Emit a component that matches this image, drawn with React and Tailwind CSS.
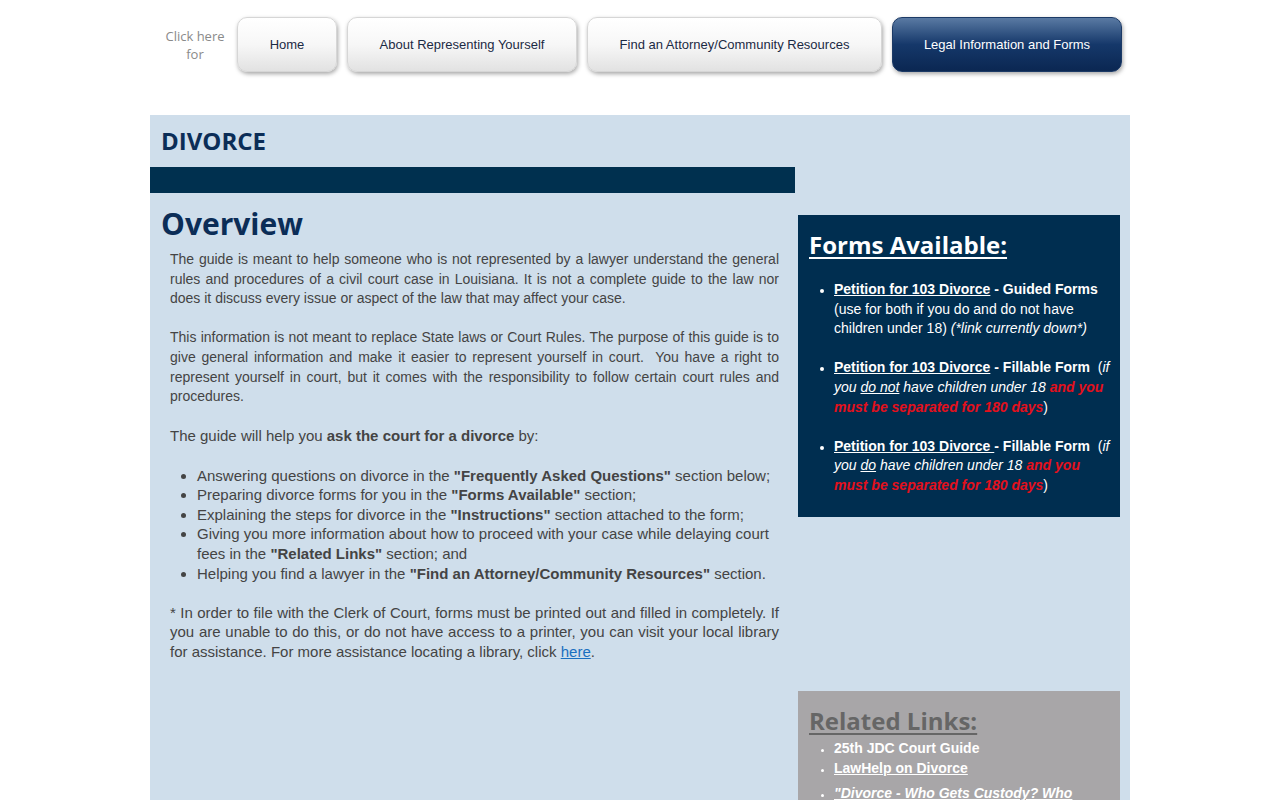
const open = { fontFamily: '"Open Sans", "Noto Sans", sans-serif' }
const arial = { fontFamily: '"Liberation Sans", Arial, sans-serif' }

export default function App() {
  return (
    <div className="min-h-screen bg-white" style={arial}>
      {/* NAV */}
      <div className="w-[980px] mx-auto flex items-start pt-[17px] h-[115px]">
        <div className="w-[86px] pl-[4px] pt-[10px] text-center text-[13px] leading-[18px] text-[#8a8a8a]" style={open}>
          Click here<br />for
        </div>
        <div className="flex gap-[10px] ml-[1px]">
          <NavButton w="w-[100px]">Home</NavButton>
          <NavButton w="w-[230px]">About Representing Yourself</NavButton>
          <NavButton w="w-[295px]">Find an Attorney/Community Resources</NavButton>
          <NavButton w="w-[230px]" active>Legal Information and Forms</NavButton>
        </div>
      </div>

      {/* MAIN */}
      <div className="w-[980px] mx-auto bg-[#cfdeeb] flex min-h-[685px]">
        <div className="w-[645px]">
          <div className="h-[52px] pl-[11px] flex items-center">
            <h1 className="text-[24px] font-bold text-[#0b2d57]" style={open}>DIVORCE</h1>
          </div>
          <div className="h-[26px] bg-[#00304f]" />
          <h2 className="pl-[11px] pt-[12px] text-[30px] leading-[38px] font-bold text-[#0b2d57]" style={open}>Overview</h2>
          <div className="pl-[20px] pr-[16px] pt-[7px] text-[14px] leading-[19.6px] text-[#444] text-justify space-y-[19.6px] pb-10">
            <p>
              The guide is meant to help someone who is not represented by a lawyer understand the general rules and procedures of a civil court case in Louisiana. It is not a complete guide to the law nor does it discuss every issue or aspect of the law that may affect your case.
            </p>
            <p>
              This information is not meant to replace State laws or Court Rules. The purpose of this guide is to give general information and make it easier to represent yourself in court.&nbsp; You have a right to represent yourself in court, but it comes with the responsibility to follow certain court rules and procedures.
            </p>
            <p className="text-[15px]">
              The guide will help you <strong>ask the court for a divorce</strong> by:
            </p>
            <ul className="list-disc pl-[27px] text-[15px] text-left">
              <li>Answering questions on divorce in the <strong>"Frequently Asked Questions"</strong> section below;</li>
              <li>Preparing divorce forms for you in the <strong>"Forms Available"</strong> section;</li>
              <li>Explaining the steps for divorce in the <strong>"Instructions"</strong> section attached to the form;</li>
              <li>Giving you more information about how to proceed with your case while delaying court fees in the <strong>"Related Links"</strong> section; and</li>
              <li>Helping you find a lawyer in the <strong>"Find an Attorney/Community Resources"</strong> section.</li>
            </ul>
            <p className="text-[15px]">
              * In order to file with the Clerk of Court, forms must be printed out and filled in completely. If you are unable to do this, or do not have access to a printer, you can visit your local library for assistance. For more assistance locating a library, click <a className="text-[#1a6fc0] underline">here</a>.
            </p>
          </div>
        </div>

        <div className="w-[322px] ml-[3px] pt-[100px]">
          <div className="bg-[#002e50] h-[302px] pl-[11px] pr-[6px] pt-[15px]">
            <h3 className="text-[24px] leading-[30px] font-bold text-white underline underline-offset-[3px] decoration-2" style={open}>Forms Available:</h3>
            <ul className="list-disc pl-[25px] mt-[20px] text-[14px] leading-[19.6px] text-white space-y-[19.6px] marker:text-[12px]">
              <li>
                <span className="font-bold underline">Petition for 103 Divorce</span>
                <span className="font-bold"> - Guided Forms</span> (use for both if you do and do not have children under 18) <em>(*link currently down*)</em>
              </li>
              <li>
                <span className="font-bold underline">Petition for 103 Divorce</span>
                <span className="font-bold"> - Fillable Form</span>&nbsp; (<em>if you <u>do not</u> have children under 18 <strong className="text-[#e4101c]">and you must be separated for 180 days</strong></em>)
              </li>
              <li>
                <span className="font-bold underline">Petition for 103 Divorce </span>
                <span className="font-bold">- Fillable Form</span>&nbsp; (<em>if you <u>do</u> have children under 18 <strong className="text-[#e4101c]">and you must be separated for 180 days</strong></em>)
              </li>
            </ul>
          </div>

          <div className="bg-[#a8a6a8] mt-[174px] pl-[11px] pr-[30px] pt-[15px] pb-4">
            <h3 className="text-[24px] leading-[30px] font-bold text-[#666] underline underline-offset-[3px] decoration-2" style={open}>Related Links:</h3>
            <ul className="list-disc pl-[25px] text-[14px] leading-[20px] text-white font-bold marker:text-[11px] pt-[2px]">
              <li>25th JDC Court Guide</li>
              <li className="underline">LawHelp on Divorce</li>
              <li className="underline italic mt-[5px]">"Divorce - Who Gets Custody? Who Gets the House?"</li>
            </ul>
          </div>
        </div>
      </div>
    </div>
  )
}

function NavButton({ w, active = false, children }) {
  const look = active
    ? 'bg-gradient-to-b from-[#5a7aa3] via-[#15386a] to-[#0b2752] text-white border-[#1c3a66]'
    : 'bg-gradient-to-b from-white via-[#f7f7f7] to-[#e2e2e2] text-[#1b2a44] border-[#d6d6d6]'
  return (
    <div
      className={`${w} h-[55px] rounded-[10px] border flex items-center justify-center text-[13px] shadow-[1px_2px_4px_rgba(0,0,0,0.35)] ${look}`}
    >
      {children}
    </div>
  )
}
